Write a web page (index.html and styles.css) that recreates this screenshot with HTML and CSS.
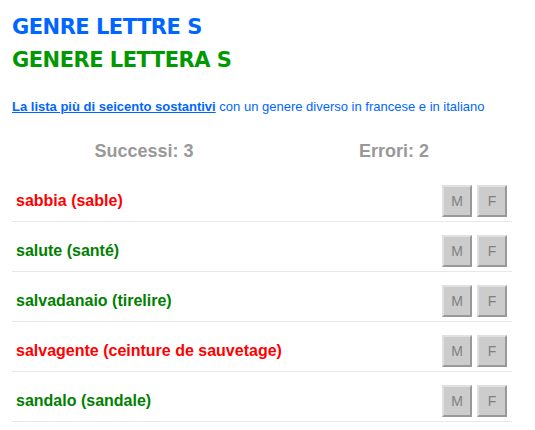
FILE: index.html
```html
<!DOCTYPE html>
<html lang="it">
<head>
<meta charset="utf-8">
<link rel="stylesheet" href="styles.css">
</head>
<body>
<div class="page">
  <h1 class="title title-fr">GENRE LETTRE S</h1>
  <h2 class="title title-it">GENERE LETTERA S</h2>
  <p class="intro"><a href="#" class="intro-link">La lista più di seicento sostantivi</a> con un genere diverso in francese e in italiano</p>
  <div class="stats">
    <div class="stat">Successi: 3</div>
    <div class="stat">Errori: 2</div>
  </div>
  <ul class="words">
    <li class="word"><span class="word-text wrong">sabbia (sable)</span><span class="btns"><button class="btn">M</button><button class="btn">F</button></span></li>
    <li class="word"><span class="word-text right">salute (santé)</span><span class="btns"><button class="btn">M</button><button class="btn">F</button></span></li>
    <li class="word"><span class="word-text right">salvadanaio (tirelire)</span><span class="btns"><button class="btn">M</button><button class="btn">F</button></span></li>
    <li class="word"><span class="word-text wrong">salvagente (ceinture de sauvetage)</span><span class="btns"><button class="btn">M</button><button class="btn">F</button></span></li>
    <li class="word"><span class="word-text right">sandalo (sandale)</span><span class="btns"><button class="btn">M</button><button class="btn">F</button></span></li>
  </ul>
</div>
</body>
</html>
```
FILE: styles.css
```css
html, body {
  margin: 0;
  padding: 0;
  background: #fff;
}
.page {
  width: 500px;
  padding: 11px 0 0 12px;
  font-family: "Liberation Sans", Arial, sans-serif;
}
.title {
  margin: 0;
  font-family: "DejaVu Sans", sans-serif;
  font-weight: bold;
  font-size: 21px;
  line-height: 33px;
  letter-spacing: -0.5px;
}
.title-fr { color: #0066ff; }
.title-it { color: #009900; }
.intro {
  margin: 21px 0 0;
  font-size: 13px;
  line-height: 18px;
  color: #0066ff;
}
.intro-link {
  color: #0066ff;
  font-weight: bold;
  text-decoration: underline;
}
.stats {
  display: grid;
  grid-template-columns: 250px 250px;
  margin-top: 24px;
  margin-left: 7px;
}
.stat {
  text-align: center;
  font-weight: bold;
  font-size: 18px;
  line-height: 22px;
  color: #999;
}
.words {
  list-style: none;
  margin: 10px 0 0;
  padding: 0;
}
.word {
  display: flex;
  align-items: center;
  justify-content: space-between;
  padding: 13px 5px 4px 4px;
  border-bottom: 1px solid #e8e8e8;
}
.word-text {
  font-weight: bold;
  font-size: 16px;
}
.wrong { color: #ff0000; }
.right { color: #008000; }
.btns {
  display: flex;
  gap: 5px;
}
.btn {
  width: 30px;
  height: 32px;
  padding: 0;
  background: #cccccc;
  border: 2px solid;
  border-color: #e0e0e0 #999 #999 #e0e0e0;
  color: #808080;
  font-family: "Liberation Sans", Arial, sans-serif;
  font-size: 14px;
}
```
